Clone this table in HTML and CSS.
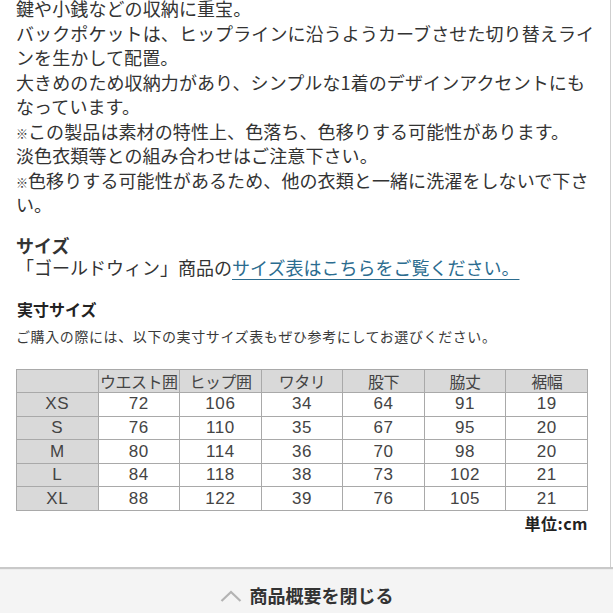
FILE: index.html
```html
<!DOCTYPE html>
<html lang="ja">
<head>
<meta charset="utf-8">
<link rel="stylesheet" href="styles.css">
</head>
<body>
<div class="main">
  <p class="desc">鍵や小銭などの収納に重宝。<br>バックポケットは、ヒップラインに沿うようカーブさせた切り替えライ<br>ンを生かして配置。<br>大きめのため収納力があり、シンプルな1着のデザインアクセントにも<br>なっています。<br><span class="mark">※</span>この製品は素材の特性上、色落ち、色移りする可能性があります。<br>淡色衣類等との組み合わせはご注意下さい。<br><span class="mark">※</span>色移りする可能性があるため、他の衣類と一緒に洗濯をしないで下さ<br>い。</p>
  <h2 class="heading">サイズ</h2>
  <p class="linkline">「ゴールドウィン」商品の<a class="link" href="#">サイズ表はこちらをご覧ください。</a></p>
  <div class="sizechart">
    <h3 class="chart-title">実寸サイズ</h3>
    <p class="chart-note">ご購入の際には、以下の実寸サイズ表もぜひ参考にしてお選びください。</p>
    <table class="table">
      <tr class="head"><th></th><th>ウエスト囲</th><th>ヒップ囲</th><th>ワタリ</th><th>股下</th><th>脇丈</th><th>裾幅</th></tr>
      <tr><th>XS</th><td>72</td><td>106</td><td>34</td><td>64</td><td>91</td><td>19</td></tr>
      <tr><th>S</th><td>76</td><td>110</td><td>35</td><td>67</td><td>95</td><td>20</td></tr>
      <tr><th>M</th><td>80</td><td>114</td><td>36</td><td>70</td><td>98</td><td>20</td></tr>
      <tr><th>L</th><td>84</td><td>118</td><td>38</td><td>73</td><td>102</td><td>21</td></tr>
      <tr><th>XL</th><td>88</td><td>122</td><td>39</td><td>76</td><td>105</td><td>21</td></tr>
    </table>
    <p class="unit">単位:cm</p>
  </div>
</div>
<div class="footer">
  <button class="close">
    <svg class="chev" width="22" height="12" viewBox="0 0 22 12"><polyline points="1.5,11 11,2 20.5,11" fill="none" stroke="#b3b3b3" stroke-width="2.2"/></svg>
    <span>商品概要を閉じる</span>
  </button>
</div>
</body>
</html>
```

FILE: styles.css
```css
* { box-sizing: border-box; }
html, body { margin: 0; padding: 0; background: #fff; }
body {
  width: 613px;
  height: 613px;
  overflow: hidden;
  font-family: "Noto Sans CJK JP", "Noto Sans", sans-serif;
  color: #333;
}
.main {
  width: 611px;
  height: 567px;
  border-right: 1px solid #cfcfcf;
  padding-left: 16px;
  overflow: hidden;
}
.desc {
  margin: -4px 0 0;
  width: 594px;
  font-size: 18px;
  line-height: 24.5px;
  white-space: nowrap;
  letter-spacing: 0.1px;
}
.mark {
  font-size: 12px;
  line-height: 0;
  letter-spacing: 0;
}
.heading {
  margin: 17px 0 0;
  font-size: 18px;
  line-height: 22px;
  font-weight: bold;
  color: #333;
}
.linkline {
  margin: 0;
  font-size: 18px;
  line-height: 22px;
}
.link {
  color: #2b6c8f;
  text-decoration: underline;
  text-underline-offset: 4px;
}
.sizechart { color: #3a3a3a; }
.chart-title {
  margin: 20px 0 0;
  padding-left: 1px;
  font-size: 16px;
  line-height: 22px;
  font-weight: bold;
  color: #222;
}
.chart-note {
  margin: 6px 0 0;
  font-size: 14px;
  line-height: 20px;
  letter-spacing: 0.6px;
  white-space: nowrap;
}
.table {
  margin-top: 23px;
  width: 572px;
  border-collapse: collapse;
  table-layout: fixed;
  font-family: "Liberation Sans", "Noto Sans CJK JP", sans-serif;
  font-size: 17px;
  color: #444;
}
.table th, .table td {
  border: 1px solid #a9a9a9;
  height: 23.6px;
  padding: 0;
  text-align: center;
  font-weight: normal;
  line-height: 20px;
  letter-spacing: 0.6px;
}
.table th { background: #d9d9d9; }
.table td { background: #fff; }
.table .head th {
  font-family: "Noto Sans CJK JP", sans-serif;
  font-size: 16px;
  letter-spacing: -0.5px;
}
.unit {
  margin: 3px 0 0;
  width: 572px;
  text-align: right;
  font-size: 16px;
  line-height: 18px;
  font-weight: bold;
  color: #222;
  letter-spacing: 0.5px;
}
.footer {
  border-top: 2px solid #c9c9c9;
  background: #f4f4f4;
  height: 46px;
  box-shadow: inset 0 1px 0 #ececec;
  display: flex;
  justify-content: center;
}
.close {
  margin: 14px 0 0 0;
  padding: 0;
  border: 0;
  background: transparent;
  display: flex;
  align-items: center;
  gap: 8px;
  height: 24px;
  font-family: "Noto Sans CJK JP", sans-serif;
  font-size: 18px;
  font-weight: bold;
  color: #333;
}
.chev { margin-top: 2px; }
```
